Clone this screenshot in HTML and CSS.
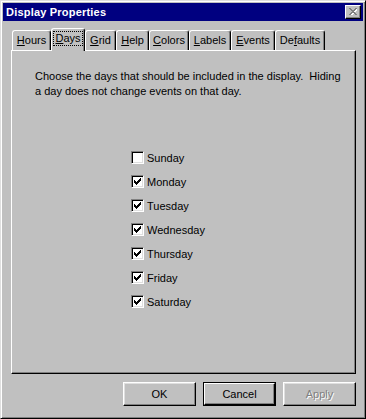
FILE: index.html
```
<!DOCTYPE html>
<html>
<head>
<meta charset="utf-8">
<link rel="stylesheet" href="styles.css">
</head>
<body>
<div class="window">
  <div class="titlebar">
    <span class="title">Display Properties</span>
    <span class="close">
      <svg width="8" height="7" viewBox="0 0 8 7" shape-rendering="crispEdges">
        <g fill="#fff" transform="translate(1,1)">
          <rect x="0" y="0" width="2" height="1"/><rect x="6" y="0" width="2" height="1"/>
          <rect x="1" y="1" width="2" height="1"/><rect x="5" y="1" width="2" height="1"/>
          <rect x="2" y="2" width="4" height="1"/>
          <rect x="3" y="3" width="2" height="1"/>
          <rect x="2" y="4" width="4" height="1"/>
          <rect x="1" y="5" width="2" height="1"/><rect x="5" y="5" width="2" height="1"/>
          <rect x="0" y="6" width="2" height="1"/><rect x="6" y="6" width="2" height="1"/>
        </g>
        <g fill="#808080">
          <rect x="0" y="0" width="2" height="1"/><rect x="6" y="0" width="2" height="1"/>
          <rect x="1" y="1" width="2" height="1"/><rect x="5" y="1" width="2" height="1"/>
          <rect x="2" y="2" width="4" height="1"/>
          <rect x="3" y="3" width="2" height="1"/>
          <rect x="2" y="4" width="4" height="1"/>
          <rect x="1" y="5" width="2" height="1"/><rect x="5" y="5" width="2" height="1"/>
          <rect x="0" y="6" width="2" height="1"/><rect x="6" y="6" width="2" height="1"/>
        </g>
      </svg>
    </span>
  </div>
  <div class="body">
    <div class="tabs">
      <div class="tab w-hours"><u>H</u>ours</div>
      <div class="tab selected w-days"><span class="focus"><u>D</u>ays</span></div>
      <div class="tab w-grid"><u>G</u>rid</div>
      <div class="tab w-help"><u>H</u>elp</div>
      <div class="tab w-colors"><u>C</u>olors</div>
      <div class="tab w-labels"><u>L</u>abels</div>
      <div class="tab w-events"><u>E</u>vents</div>
      <div class="tab w-defaults">De<u>f</u>aults</div>
    </div>
    <div class="panel">
      <p class="desc">Choose the days that should be included in the display.&nbsp; Hiding<br>a day does not change events on that day.</p>
      <div class="days">
        <div class="row"><span class="cb"></span><span>Sunday</span></div>
        <div class="row"><span class="cb checked"><svg width="7" height="7" viewBox="0 0 7 7" shape-rendering="crispEdges"><path d="M6 0h1v3h-1zM5 1h1v3h-1zM4 2h1v3h-1zM3 3h1v3h-1zM2 4h1v3h-1zM1 3h1v3h-1zM0 2h1v3h-1z" fill="#000"/></svg></span><span>Monday</span></div>
        <div class="row"><span class="cb checked"><svg width="7" height="7" viewBox="0 0 7 7" shape-rendering="crispEdges"><path d="M6 0h1v3h-1zM5 1h1v3h-1zM4 2h1v3h-1zM3 3h1v3h-1zM2 4h1v3h-1zM1 3h1v3h-1zM0 2h1v3h-1z" fill="#000"/></svg></span><span>Tuesday</span></div>
        <div class="row"><span class="cb checked"><svg width="7" height="7" viewBox="0 0 7 7" shape-rendering="crispEdges"><path d="M6 0h1v3h-1zM5 1h1v3h-1zM4 2h1v3h-1zM3 3h1v3h-1zM2 4h1v3h-1zM1 3h1v3h-1zM0 2h1v3h-1z" fill="#000"/></svg></span><span>Wednesday</span></div>
        <div class="row"><span class="cb checked"><svg width="7" height="7" viewBox="0 0 7 7" shape-rendering="crispEdges"><path d="M6 0h1v3h-1zM5 1h1v3h-1zM4 2h1v3h-1zM3 3h1v3h-1zM2 4h1v3h-1zM1 3h1v3h-1zM0 2h1v3h-1z" fill="#000"/></svg></span><span>Thursday</span></div>
        <div class="row"><span class="cb checked"><svg width="7" height="7" viewBox="0 0 7 7" shape-rendering="crispEdges"><path d="M6 0h1v3h-1zM5 1h1v3h-1zM4 2h1v3h-1zM3 3h1v3h-1zM2 4h1v3h-1zM1 3h1v3h-1zM0 2h1v3h-1z" fill="#000"/></svg></span><span>Friday</span></div>
        <div class="row"><span class="cb checked"><svg width="7" height="7" viewBox="0 0 7 7" shape-rendering="crispEdges"><path d="M6 0h1v3h-1zM5 1h1v3h-1zM4 2h1v3h-1zM3 3h1v3h-1zM2 4h1v3h-1zM1 3h1v3h-1zM0 2h1v3h-1z" fill="#000"/></svg></span><span>Saturday</span></div>
      </div>
    </div>
    <div class="buttons">
      <div class="btn">OK</div>
      <div class="btn default"><span class="btn-inner">Cancel</span></div>
      <div class="btn disabled">Apply</div>
    </div>
  </div>
</div>
</body>
</html>
```
FILE: styles.css
```
html, body {
  margin: 0;
  padding: 0;
  background: #c0c0c0;
}
body {
  font-family: "Liberation Sans", Arial, sans-serif;
  font-size: 11px;
  color: #000;
}
.window {
  box-sizing: border-box;
  width: 366px;
  height: 419px;
  background: #c0c0c0;
  border: 1px solid;
  border-color: #dfdfdf #000 #000 #dfdfdf;
  box-shadow: inset 1px 1px #fff, inset -1px -1px #808080;
  padding: 2px;
  display: flex;
  flex-direction: column;
}
.titlebar {
  height: 18px;
  background: #000080;
  display: flex;
  align-items: center;
  justify-content: space-between;
  padding: 0 2px 0 3px;
}
.title {
  color: #fff;
  font-weight: bold;
  font-size: 11px;
  letter-spacing: 0.2px;
}
.close {
  box-sizing: border-box;
  width: 16px;
  height: 14px;
  background: #c0c0c0;
  border: 1px solid;
  border-color: #fff #000 #000 #fff;
  box-shadow: inset -1px -1px #808080;
  display: flex;
  align-items: center;
  justify-content: center;
  padding: 0 1px 1px 0;
  margin-top: -1px;
}
.close svg { display: block; }
.body {
  padding: 7px 7px 0 8px;
  display: flex;
  flex-direction: column;
}
.tabs {
  display: flex;
  align-items: flex-end;
  padding-left: 1px;
  height: 22px;
}
.tab {
  box-sizing: border-box;
  height: 20px;
  border-top: 1px solid #fff;
  border-left: 1px solid #fff;
  border-right: 1px solid #000;
  border-top-left-radius: 3px;
  border-top-right-radius: 3px;
  box-shadow: inset -1px 0 #808080;
  display: flex;
  align-items: center;
  justify-content: center;
  padding-bottom: 2px;
  white-space: nowrap;
}
.tab.selected {
  height: 23px;
  margin-bottom: -1px;
  background: #c0c0c0;
  z-index: 1;
  padding-bottom: 3px;
}
.focus {
  outline: 1px dotted #000;
  outline-offset: 0;
  padding: 0 1px;
  line-height: 13px;
}
.w-hours { width: 39px; }
.w-days { width: 34px; }
.w-grid { width: 31px; }
.w-help { width: 33px; }
.w-colors { width: 40px; }
.w-labels { width: 42px; }
.w-events { width: 44px; }
.w-defaults { width: 50px; }
.panel {
  box-sizing: border-box;
  width: 345px;
  height: 324px;
  border: 1px solid;
  border-color: #fff #000 #000 #fff;
  box-shadow: inset -1px -1px #808080;
  padding: 18px 0 0 23px;
}
.desc {
  margin: 0;
  line-height: 15px;
}
.days {
  margin-top: 52px;
  padding-left: 96px;
  display: flex;
  flex-direction: column;
  gap: 11px;
}
.row {
  display: flex;
  align-items: center;
  height: 13px;
  gap: 3px;
}
.cb {
  box-sizing: border-box;
  width: 13px;
  height: 13px;
  background: #fff;
  border: 1px solid;
  border-color: #808080 #fff #fff #808080;
  box-shadow: inset 1px 1px #000, inset -1px -1px #dfdfdf;
  padding: 2px;
  display: block;
}
.cb svg { display: block; }
.buttons {
  display: flex;
  justify-content: flex-end;
  gap: 7px;
  margin-top: 8px;
}
.btn {
  box-sizing: border-box;
  width: 73px;
  height: 24px;
  border: 1px solid;
  border-color: #fff #000 #000 #fff;
  box-shadow: inset -1px -1px #808080, inset 1px 1px #dfdfdf;
  display: flex;
  align-items: center;
  justify-content: center;
}
.btn.default {
  border: 1px solid #000;
  box-shadow: none;
  padding: 0;
}
.btn-inner {
  box-sizing: border-box;
  width: 100%;
  height: 100%;
  border: 1px solid;
  border-color: #fff #000 #000 #fff;
  box-shadow: inset -1px -1px #808080;
  display: flex;
  align-items: center;
  justify-content: center;
}
.btn.disabled {
  color: #808080;
  text-shadow: 1px 1px #fff;
}
```
